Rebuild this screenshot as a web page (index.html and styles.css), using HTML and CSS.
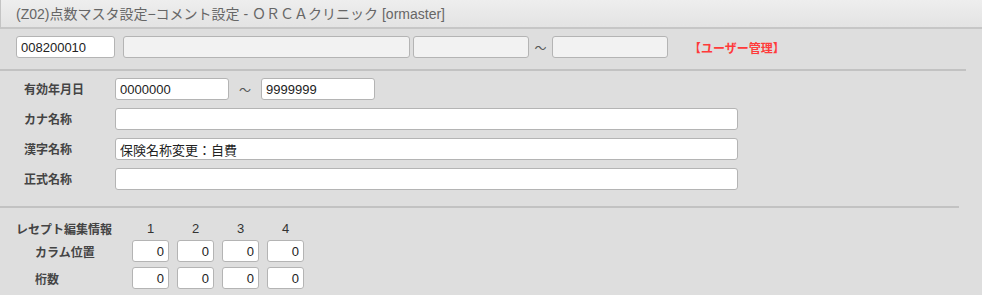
FILE: index.html
```html
<!DOCTYPE html>
<html>
<head>
    <meta charset="UTF-8">
    <title>点数マスタ設定</title>
    <link rel="stylesheet" href="styles.css">
</head>
<body>
    <div class="title-bar">(Z02)点数マスタ設定−コメント設定 - ＯＲＣＡクリニック [ormaster]</div>

    <div class="code-row">
        <input type="text" class="field code-field" value="008200010">
        <input type="text" class="field off name-field" disabled>
        <input type="text" class="field off range-field" disabled>
        <span class="tilde wide">～</span>
        <input type="text" class="field off range-field" disabled>
        <span class="user-mark">【ユーザー管理】</span>
    </div>

    <div class="sep sep-top"></div>

    <div class="form">
        <div class="form-row">
            <label class="label">有効年月日</label>
            <input type="text" class="field date-field" value="0000000">
            <span class="tilde">～</span>
            <input type="text" class="field date-field" value="9999999">
        </div>
        <div class="form-row">
            <label class="label">カナ名称</label>
            <input type="text" class="field long-field">
        </div>
        <div class="form-row">
            <label class="label">漢字名称</label>
            <input type="text" class="field long-field" value="保険名称変更：自費">
        </div>
        <div class="form-row">
            <label class="label">正式名称</label>
            <input type="text" class="field long-field">
        </div>
    </div>

    <div class="sep sep-bottom"></div>

    <div class="rece">
        <div class="rece-row rece-head">
            <span class="rece-title">レセプト編集情報</span>
            <span class="col-no">1</span>
            <span class="col-no">2</span>
            <span class="col-no">3</span>
            <span class="col-no">4</span>
        </div>
        <div class="rece-row">
            <label class="rece-label">カラム位置</label>
            <input type="text" class="field num-field" value="0">
            <input type="text" class="field num-field" value="0">
            <input type="text" class="field num-field" value="0">
            <input type="text" class="field num-field" value="0">
        </div>
        <div class="rece-row">
            <label class="rece-label">桁数</label>
            <input type="text" class="field num-field" value="0">
            <input type="text" class="field num-field" value="0">
            <input type="text" class="field num-field" value="0">
            <input type="text" class="field num-field" value="0">
        </div>
    </div>
</body>
</html>
```

FILE: styles.css
```css
body {
    margin: 0;
    padding: 0;
    background-color: #dedede;
    font-family: "Liberation Sans", "Noto Sans CJK JP", sans-serif;
    color: #333;
    font-size: 12px;
}
.title-bar {
    height: 27px;
    line-height: 28px;
    padding-left: 15px;
    background: linear-gradient(#eeeeee, #e3e3e3);
    border-left: 1px solid #c4c4c4;
    border-bottom: 2px solid #c6c6c6;
    color: #666;
    font-size: 14px;
    white-space: nowrap;
}
.field {
    box-sizing: border-box;
    height: 22px;
    margin: 0;
    padding: 0 4px;
    border: 1px solid #b4b4b4;
    border-radius: 3px;
    background-color: #fff;
    font-family: "Liberation Sans", "Noto Sans CJK JP", sans-serif;
    font-size: 13px;
    color: #222;
    outline: none;
}
.field.off {
    background-color: #f2f2f2;
}
.code-row {
    display: flex;
    align-items: center;
    margin: 7px 0 0 16px;
}
.code-field {
    width: 99px;
    margin-right: 8px;
}
.name-field {
    width: 287px;
    margin-right: 3px;
}
.range-field {
    width: 116px;
}
.tilde {
    font-family: "Noto Sans CJK JP", sans-serif;
    font-size: 12px;
    color: #555;
    text-align: center;
    width: 32px;
}
.tilde.wide {
    width: 23px;
}
.user-mark {
    margin-left: 21px;
    color: #ff3a3a;
    font-weight: bold;
    font-size: 12px;
    font-family: "Noto Sans CJK JP", sans-serif;
}
.sep {
    height: 2px;
    background-color: #c2c2c2;
}
.sep-top {
    width: 966px;
    margin-top: 11px;
}
.sep-bottom {
    width: 959px;
    margin-top: 16px;
}
.form {
    display: flex;
    flex-direction: column;
    gap: 8px;
    padding: 7px 0 0 24px;
}
.form-row {
    display: flex;
    align-items: center;
}
.label {
    width: 91px;
    font-weight: bold;
    font-family: "Noto Sans CJK JP", sans-serif;
    font-size: 12px;
    color: #444;
    margin-top: -2px;
}
.date-field {
    width: 114px;
}
.long-field {
    width: 623px;
}
.rece {
    padding: 12px 0 0 16px;
    display: flex;
    flex-direction: column;
    gap: 5px;
}
.rece-row {
    display: flex;
    align-items: center;
    gap: 8px;
}
.rece-head {
    height: 16px;
    margin-bottom: -1px;
}
.rece-title {
    width: 108px;
    font-weight: bold;
    font-family: "Noto Sans CJK JP", sans-serif;
    font-size: 12px;
    color: #444;
}
.col-no {
    width: 37px;
    text-align: center;
    font-size: 13px;
    color: #333;
}
.rece-label {
    width: 89px;
    padding-left: 19px;
    font-weight: bold;
    font-family: "Noto Sans CJK JP", sans-serif;
    font-size: 12px;
    color: #444;
}
.num-field {
    width: 37px;
    text-align: right;
}
```
